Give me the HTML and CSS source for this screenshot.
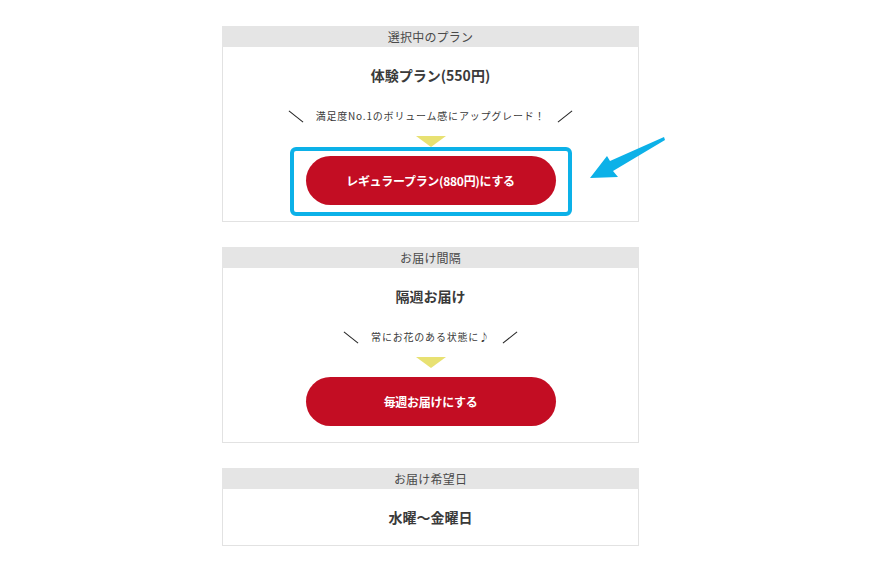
FILE: index.html
```html
<!DOCTYPE html>
<html lang="ja">
<head>
<meta charset="utf-8">
<title>プラン</title>
<link rel="stylesheet" href="styles.css">
</head>
<body>
<div class="page">
  <section class="card card--highlight">
    <div class="card-head">選択中のプラン</div>
    <div class="card-body">
      <p class="card-title">体験プラン(550円)</p>
      <p class="lead">満足度No.1のボリューム感にアップグレード！</p>
      <span class="tri"></span>
      <a class="btn">レギュラープラン(880円)にする</a>
    </div>
    <span class="focus-box"></span>
    <svg class="pointer" width="85" height="50" viewBox="0 0 85 50" aria-hidden="true">
      <polygon points="79,3 25,27 22,22 5,44 33,43 28,37 80,6" fill="#0cb1e8"/>
    </svg>
  </section>

  <section class="card">
    <div class="card-head">お届け間隔</div>
    <div class="card-body">
      <p class="card-title">隔週お届け</p>
      <p class="lead">常にお花のある状態に♪</p>
      <span class="tri"></span>
      <a class="btn">毎週お届けにする</a>
    </div>
  </section>

  <section class="card">
    <div class="card-head">お届け希望日</div>
    <div class="card-body card-body--short">
      <p class="card-title">水曜〜金曜日</p>
    </div>
  </section>
</div>
</body>
</html>
```

FILE: styles.css
```css
* { box-sizing: border-box; }

html, body {
  margin: 0;
  padding: 0;
  background: #ffffff;
}

body {
  font-family: "Noto Sans CJK JP", "Noto Sans", sans-serif;
  color: #3a3a3a;
}

.page {
  width: 417px;
  margin-left: 222px;
  padding-top: 26px;
  display: flex;
  flex-direction: column;
  gap: 25px;
}

.card {
  position: relative;
  border: 1px solid #e2e2e2;
  border-top: none;
  background: #fff;
}

.card-head {
  height: 21px;
  line-height: 21px;
  margin: 0 -1px;
  background: #e5e5e5;
  text-align: center;
  font-size: 12px;
  color: #4a4a4a;
  letter-spacing: 0.2px;
}

.card-body {
  display: flex;
  flex-direction: column;
  align-items: center;
  padding: 18px 0 16px;
}

.card-body--short {
  padding-bottom: 17px;
}

.card-title {
  margin: 0;
  font-size: 14px;
  line-height: 21px;
  font-weight: 700;
  color: #3a3a3a;
}

.lead {
  margin: 22px 0 0;
  display: flex;
  align-items: center;
  font-size: 10px;
  line-height: 16px;
  letter-spacing: 0.8px;
  color: #3a3a3a;
}

.lead::before,
.lead::after {
  content: "";
  display: block;
  width: 18px;
  height: 1px;
  background: #222;
}

.lead::before {
  margin-right: 11px;
  transform: rotate(38deg);
}

.lead::after {
  margin-left: 11px;
  transform: rotate(-38deg);
}

.tri {
  display: block;
  margin-top: 12px;
  width: 0;
  height: 0;
  border-left: 15.5px solid transparent;
  border-right: 15.5px solid transparent;
  border-top: 11px solid #e8e172;
}

.btn {
  margin-top: 9px;
  width: 250px;
  height: 49px;
  border-radius: 25px;
  background: #c30d23;
  color: #fff;
  font-size: 12px;
  font-weight: 700;
  letter-spacing: -0.3px;
  display: flex;
  align-items: center;
  justify-content: center;
  text-decoration: none;
}

.focus-box {
  position: absolute;
  left: 67px;
  top: 121px;
  width: 282px;
  height: 69px;
  border: 4px solid #0cb1e8;
  border-radius: 6px;
}

.pointer {
  position: absolute;
  left: 362px;
  top: 108px;
  overflow: visible;
}
```
